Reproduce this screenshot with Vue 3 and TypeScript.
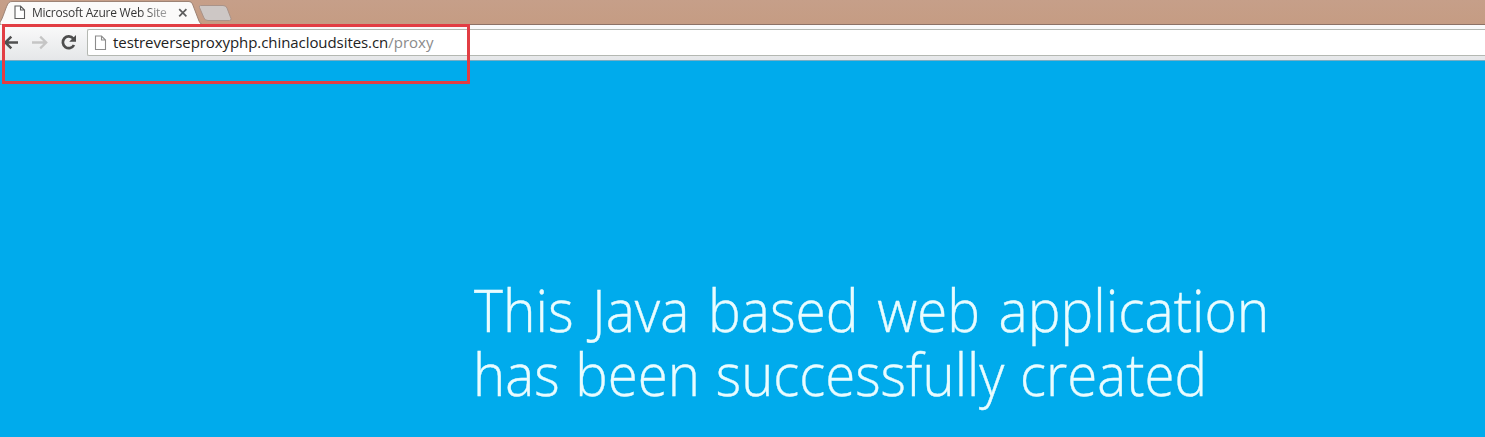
<script setup lang="ts">
const tabTitle = 'Microsoft Azure Web Site'
const host = 'testreverseproxyphp.chinacloudsites.cn'
const path = '/proxy'
const headline = ['This Java based web application', 'has been successfully created']
</script>

<template>
  <div class="window">
    <header class="tabstrip">
      <svg class="tab-shapes" width="240" height="25" viewBox="0 0 240 25">
        <path d="M0 25V22C3 19 6 5 9 2.5Q10 1.500 12 1.500H189Q191.500 1.500 192.500 4L199 21Q200 24 203 25Z" fill="#fbfaf9" stroke="#9d8375" />
        <path d="M200.500 5.500H223Q226 5.500 227 8L231 18.500Q231.500 20.500 229.500 20.500H208Q205 20.500 204 18L199.500 7.500Q199 5.500 200.500 5.500Z" fill="#cdc7c5" stroke="#a99389" />
      </svg>
      <div class="tab">
        <svg class="tab-page" width="12" height="15" viewBox="0 0 12 15">
          <path d="M1 1H6.500L10.500 5V13.500H1ZM6.500 1V5H10.500" fill="#fff" stroke="#5c5c5c" stroke-width="1.100" />
        </svg>
        <span class="tab-title">{{ tabTitle }}</span>
        <svg class="tab-close" width="10" height="10" viewBox="0 0 10 10">
          <path d="M1.200 1.200L8.400 8.400M8.400 1.200L1.200 8.400" fill="none" stroke="#5d5d5d" stroke-width="1.700" />
        </svg>
      </div>
    </header>
    <nav class="toolbar">
      <svg class="nav-icons" width="87" height="34" viewBox="0 0 87 34">
        <path d="M18 17.500H6M11.300 11.700L5.300 17.500L11.300 23.300" fill="none" stroke="#505050" stroke-width="2.500" />
        <path d="M32 17.500H45M40.200 11.700L46.200 17.500L40.200 23.300" fill="none" stroke="#c5c5c5" stroke-width="2.300" />
        <path d="M73.300 13.500A5.900 5.900 0 1 0 74 20" fill="none" stroke="#4d4d4d" stroke-width="2.700" />
        <path d="M76 10V16.800H69.200Z" fill="#4d4d4d" />
      </svg>
      <div class="omnibox">
        <svg class="url-page" width="13" height="16" viewBox="0 0 13 16">
          <path d="M1.500 1H7.500L11.500 5V14.500H1.500ZM7.500 1V5H11.500" fill="#fff" stroke="#8b8b8b" stroke-width="1.100" />
        </svg>
        <span class="url"><span class="host">{{ host }}</span><span class="path">{{ path }}</span></span>
      </div>
    </nav>
    <main class="page">
      <h1 class="headline">
        <span v-for="line in headline" :key="line" class="line">{{ line }}</span>
      </h1>
    </main>
    <div class="highlight"></div>
  </div>
</template>

<style>
body { margin: 0; }
</style>

<style scoped>
.window {
  position: relative;
  width: 1485px;
  height: 437px;
  overflow: hidden;
  display: flex;
  flex-direction: column;
  font-family: "Open Sans", "Noto Sans", sans-serif;
}
.tabstrip {
  position: relative;
  box-sizing: border-box;
  height: 25px;
  flex: none;
  background: linear-gradient(#c69f89, #c59c83);
  border-bottom: 1px solid #8c7165;
}
.tab-shapes { position: absolute; left: 0; top: 0; }
.tab {
  position: relative;
  display: flex;
  align-items: center;
  width: 200px;
  height: 25px;
  padding-left: 14px;
  box-sizing: border-box;
}
.tab-page { flex: none; }
.tab-title {
  width: 138px;
  margin-left: 6px;
  font-size: 12px;
  line-height: 24px;
  letter-spacing: -0.24px;
  white-space: nowrap;
  color: transparent;
  background: linear-gradient(90deg, #333 108px, #aaa 136px);
  background-clip: text;
}
.tab-close { flex: none; margin-left: 8px; }
.toolbar {
  display: flex;
  box-sizing: border-box;
  height: 36px;
  flex: none;
  background: linear-gradient(#fafafa, #e5e7e9);
  border-bottom: 1px solid #77adc4;
}
.nav-icons { flex: none; }
.omnibox {
  display: flex;
  align-items: center;
  box-sizing: border-box;
  flex: 1;
  height: 27px;
  margin-top: 4px;
  padding-left: 6px;
  border: 1px solid #b4b8b2;
  border-right: 0;
  border-radius: 2px 0 0 2px;
  background: #fff;
}
.url-page { flex: none; }
.url {
  margin-left: 6px;
  padding-bottom: 1px;
  font-size: 15px;
  line-height: 24px;
  white-space: nowrap;
}
.host { color: #222; letter-spacing: -0.07px; }
.path { color: #8b8b8b; }
.page {
  flex: 1;
  background: #00abec;
  padding: 216px 0 0 474px;
}
.headline {
  margin: 0;
  font-size: 59px;
  font-weight: 300;
  line-height: 64px;
  color: #e9fcff;
  -webkit-text-stroke: 0.4px #e9fcff;
}
.line {
  display: block;
  width: max-content;
  white-space: nowrap;
  word-spacing: 4.5px;
  transform: scaleX(0.934);
  transform-origin: left;
}
.line + .line {
  margin-left: -1px;
  word-spacing: 1.7px;
  transform: scaleX(0.925);
}
.highlight {
  position: absolute;
  left: 2px;
  top: 24px;
  box-sizing: border-box;
  width: 468px;
  height: 60px;
  border: 3px solid #e23d43;
}
</style>
